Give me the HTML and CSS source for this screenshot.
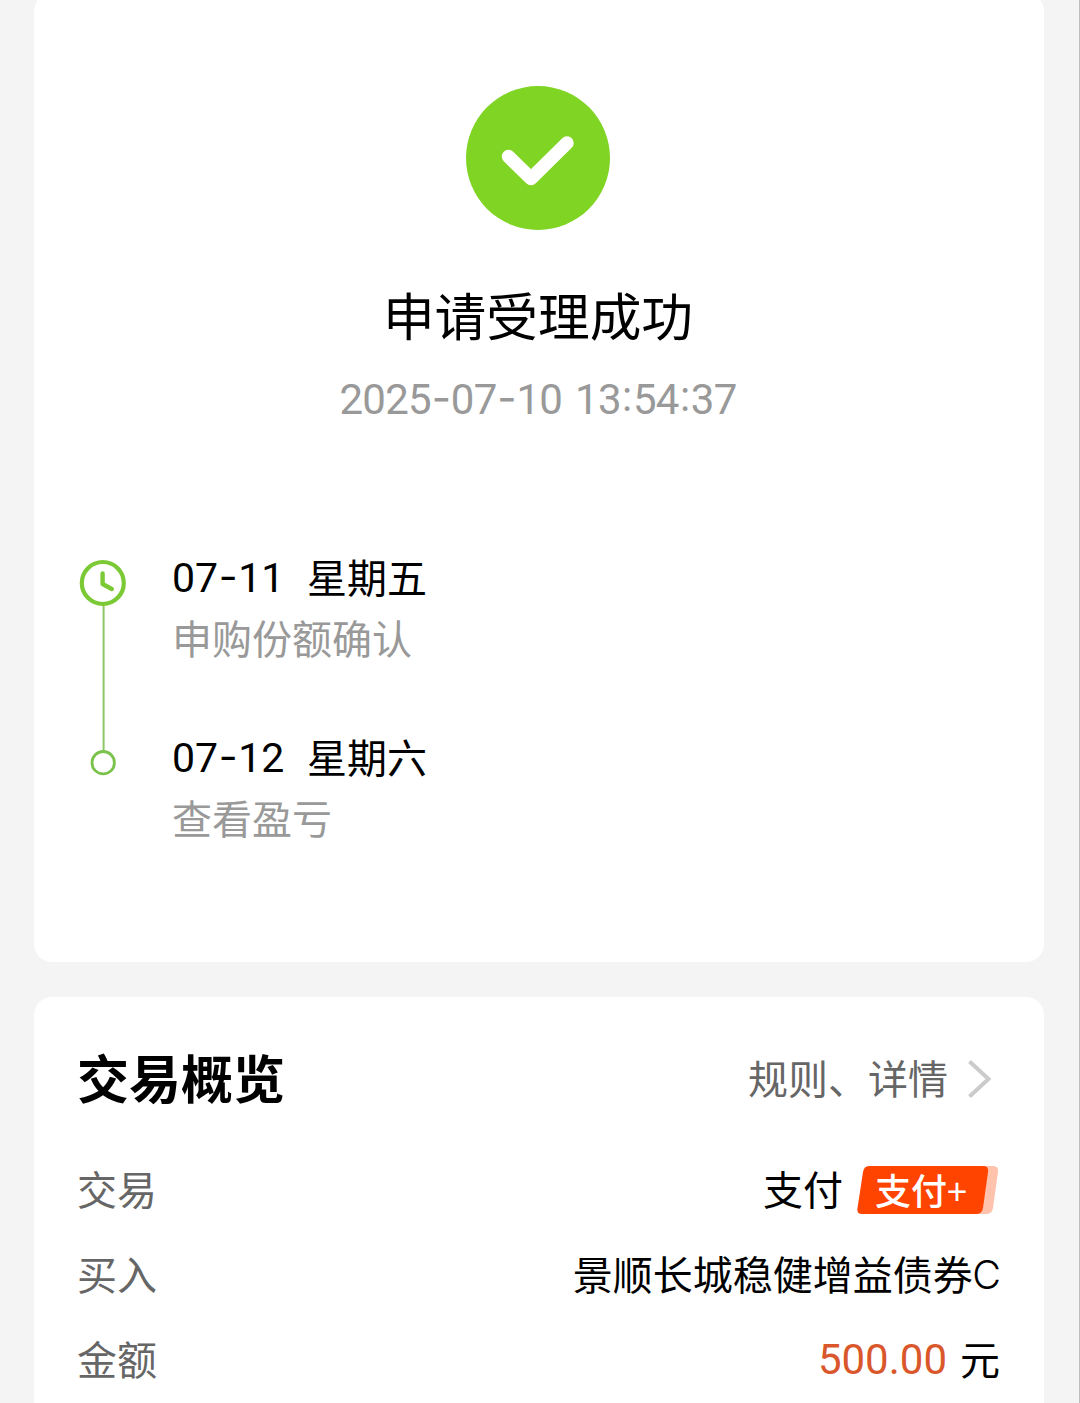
FILE: index.html
```html
<!DOCTYPE html>
<html lang="zh-CN">
<head>
<meta charset="utf-8">
<title>申请受理成功</title>
<link rel="stylesheet" href="styles.css">
</head>
<body>
<main class="page">
  <section class="card result">
    <svg class="result-icon" viewBox="0 0 144 144">
      <circle cx="72" cy="72" r="72" fill="#80d424"/>
      <path d="M42.5 70.5 65 92.5 101 57" fill="none" stroke="#fff" stroke-width="13.5" stroke-linecap="round" stroke-linejoin="round"/>
    </svg>
    <h1 class="result-title">申请受理成功</h1>
    <p class="result-time">2025<span class="dash">-</span>07<span class="dash">-</span>10 13<span class="colon">:</span>54<span class="colon">:</span>37</p>
    <div class="timeline">
      <svg class="track" viewBox="0 0 48 220">
        <path d="M24.6 46V192" stroke="#8cc665" stroke-width="2"/>
        <circle cx="23.8" cy="24" r="21" fill="#fff" stroke="#7bca35" stroke-width="4.2"/>
        <path d="M23.6 14.5V25l9.2 5" fill="none" stroke="#7bca35" stroke-width="4.4" stroke-linecap="round" stroke-linejoin="round"/>
        <circle cx="24.2" cy="203.7" r="11.2" fill="#fff" stroke="#7bc24a" stroke-width="2.8"/>
      </svg>
      <ol class="steps">
        <li class="step">
          <div class="step-date"><span class="day">07<span class="dash">-</span>11</span><span class="weekday">星期五</span></div>
          <div class="step-note">申购份额确认</div>
        </li>
        <li class="step">
          <div class="step-date"><span class="day">07<span class="dash">-</span>12</span><span class="weekday">星期六</span></div>
          <div class="step-note">查看盈亏</div>
        </li>
      </ol>
    </div>
  </section>
  <section class="card overview">
    <header class="overview-head">
      <h2 class="overview-title">交易概览</h2>
      <a class="more"><span class="more-text">规则、详情</span>
        <svg class="chevron" viewBox="0 0 24 38"><path d="M1.5 1.5 20.5 19 1.5 36.500" fill="none" stroke="#cbcbcb" stroke-width="4"/></svg>
      </a>
    </header>
    <div class="row">
      <span class="label">交易</span>
      <span class="value">支付<span class="tag">
        <svg class="tag-shape" viewBox="0 0 142 50">
          <path d="M20 1H136Q142 1 141 7L136 43Q135 49 129 49H14Z" fill="#ffc2ac"/>
          <path d="M12 1H126Q132 1 131 7L126 43Q125 49 119 49H5Q-.5 49 .5 43L6 7Q7 1 12 1Z" fill="#ff4400"/>
        </svg>
        <span class="tag-text">支付<span class="plus">+</span></span></span></span>
    </div>
    <div class="row">
      <span class="label">买入</span>
      <span class="value"><span>景顺长城稳健增益债券<span class="latin">C</span></span></span>
    </div>
    <div class="row">
      <span class="label">金额</span>
      <span class="value"><span class="amount">500.00</span>元</span>
    </div>
  </section>
</main>
</body>
</html>
```
FILE: styles.css
```css
* { box-sizing: border-box; margin: 0; padding: 0; }
body {
  background: #f4f4f4;
  color: #000;
  font-family: "Noto Sans CJK SC", sans-serif;
  font-size: 40px;
  line-height: 60px;
}
.page {
  height: 1403px;
  overflow: hidden;
  padding: 0 35px 0 34px;
  border-right: 1px solid #bdbdbd;
  white-space: nowrap;
}
.card { background: #fff; border-radius: 18px; }
.result { height: 969px; margin-top: -7px; padding: 93px 47px 0 45px; }
.result-icon { display: block; width: 144px; height: 144px; margin: 0 auto; }
.result-title { margin-top: 45px; font-size: 51.7px; font-weight: 400; line-height: 78px; text-align: center; }
.result-time {
  margin-top: 17px;
  font-family: Roboto, sans-serif;
  font-size: 42px;
  letter-spacing: -.7px;
  word-spacing: 3px;
  color: #999;
  text-align: center;
}
.dash { padding: 0 .6px; font-family: Inter, sans-serif; line-height: 1; vertical-align: 1.5px; }
.colon { padding: 0 1.3px; line-height: 1; vertical-align: 3px; }
.timeline { display: flex; margin-top: 118px; }
.track { width: 48px; height: 220px; margin-top: 11px; }
.steps { list-style: none; margin-left: 45px; }
.step { height: 180px; }
.step-date { display: flex; height: 59px; }
.day { width: 135px; font-family: Roboto, sans-serif; font-size: 41px; }
.weekday { margin-top: -2px; }
.step-note { color: #999; }
.overview { height: 440px; margin-top: 35px; padding: 36px 44px 0 43px; }
.overview-head { display: flex; justify-content: space-between; align-items: center; height: 92px; }
.overview-title { padding-bottom: 4px; font-size: 52px; font-weight: 700; }
.more { display: flex; align-items: center; gap: 20px; padding-right: 8px; color: #666; }
.more-text { padding-bottom: 5px; }
.chevron { width: 24px; height: 38px; }
.row { display: flex; justify-content: space-between; align-items: center; height: 85px; }
.row:nth-child(2) { margin-top: 22px; }
.label { padding-bottom: 4px; color: #666; }
.value { display: flex; align-items: center; padding-bottom: 4px; }
.latin { margin: 0 -1px 0 -.5px; font-family: Inter, sans-serif; font-size: 39.5px; font-weight: 300; line-height: 1; vertical-align: 1px; }
.tag { position: relative; top: 2px; width: 142px; height: 50px; margin: 0 1px 0 14px; }
.tag-shape { display: block; width: 142px; height: 50px; }
.tag-text { position: absolute; left: 18px; top: -1px; font-size: 36px; font-weight: 500; line-height: 50px; color: #fff; }
.plus { font-weight: 400; }
.amount { position: relative; top: 2px; margin-right: 13px; font-family: Roboto, sans-serif; font-size: 42px; color: #d9572b; }
```
